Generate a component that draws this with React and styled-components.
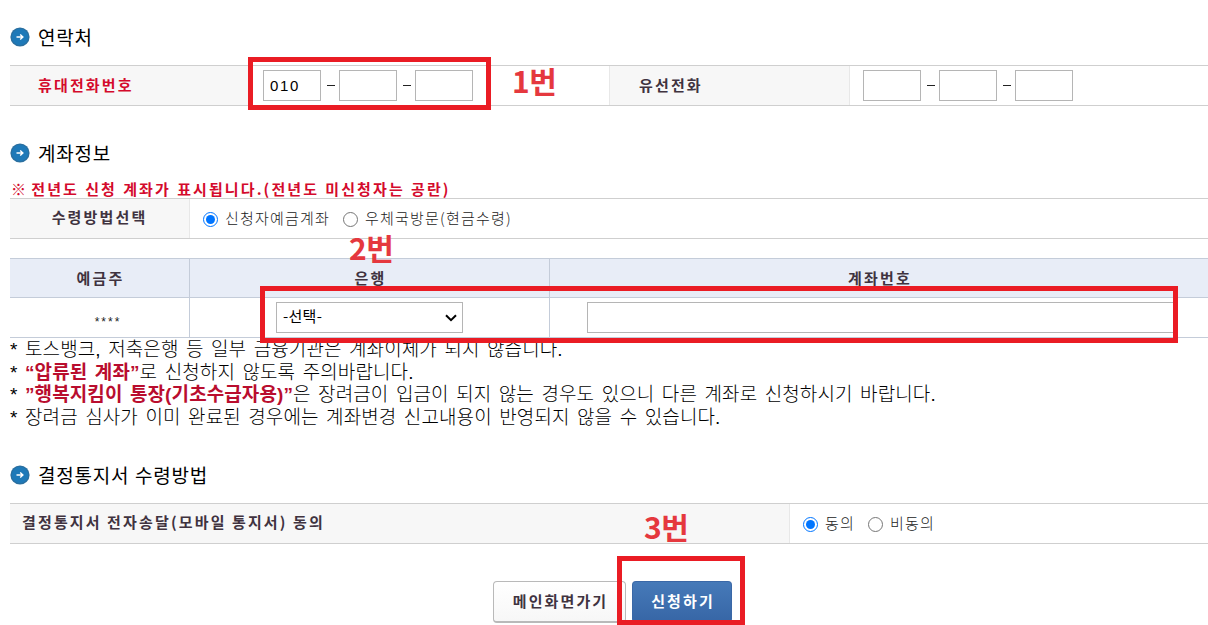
import React, { useState } from 'react'
import styled, { createGlobalStyle } from 'styled-components'

const GlobalStyle = createGlobalStyle`
    * {
        box-sizing: border-box;
    }

    body {
        margin: 0;
        overflow: hidden;
        background-color: #fff;
        color: #222;
        font-family: 'Noto Sans CJK KR', sans-serif;
    }

    input, select, button {
        font-family: inherit;
    }
`

const Page = styled.main`
    position: relative;
    display: flex;
    flex-direction: column;
    width: 1208px;
    height: 625px;
    padding: 25px 0 0 10px;
    overflow: hidden;
`

const Section = styled.section`
    margin-bottom: ${props => props.$gap}px;
`

const Heading = styled.h2`
    display: flex;
    align-items: center;
    gap: 8px;
    height: 24px;
    margin: 0;
    color: #000;
    font-size: 19px;
    font-weight: 400;
    line-height: 24px;
    letter-spacing: 0.8px;
    word-spacing: 0.5px;
    white-space: nowrap;

    svg {
        flex: none;
    }
`

const Row = styled.div`
    display: flex;
    height: 41px;
    margin-top: ${props => props.$top || 0}px;
    border-top: 1px solid #cfcfcf;
    border-bottom: 1px solid #cfcfcf;
`

const Label = styled.div`
    display: flex;
    align-items: center;
    justify-content: ${props => (props.$center ? 'center' : 'flex-start')};
    flex: none;
    width: ${props => props.$width}px;
    padding-left: ${props => props.$pad || 0}px;
    padding-bottom: ${props => props.$lift || 2}px;
    border-right: 1px solid #e8e8e8;
    background-color: #f7f7f7;
    color: ${props => (props.$required ? '#d40a2c' : '#40333f')};
    font-size: 15px;
    font-weight: 700;
    line-height: 20px;
    letter-spacing: 2.15px;
    word-spacing: -0.2px;
    white-space: nowrap;
`

const Value = styled.div`
    display: flex;
    align-items: center;
    flex: none;
    width: ${props => (props.$width ? props.$width + 'px' : 'auto')};
    padding-left: 13px;
    border-right: ${props => (props.$width ? '1px solid #e8e8e8' : 'none')};
`

const PhoneInput = styled.input`
    width: 58px;
    height: 31px;
    padding: 0 6px;
    border: 1px solid #b5b5b5;
    border-radius: 0;
    color: #000;
    font-family: 'Liberation Sans', sans-serif;
    font-size: 15px;
    letter-spacing: 1.6px;
`

const Dash = styled.span`
    width: 8px;
    height: 1px;
    margin: 0 4px 0 6px;
    background-color: #222;
`

const Notice = styled.p`
    height: 19px;
    margin: 14px 0 0 1px;
    color: #d40a2c;
    font-size: 15px;
    font-weight: 700;
    line-height: 20px;
    letter-spacing: 2.1px;
    word-spacing: 0.7px;
    white-space: nowrap;
`

const Mark = styled.span`
    margin-right: -3px;
`

const RadioLabel = styled.label`
    display: flex;
    align-items: center;
    margin-right: 13px;
    font-size: 15px;
    font-weight: 300;
    line-height: 20px;
    letter-spacing: 1.2px;
    white-space: nowrap;

    input {
        width: 15px;
        height: 15px;
        margin: 1px 7px 0 0;
        accent-color: #0075ff;
    }

    span {
        margin-top: -2px;
    }
`

const AccountTable = styled.div`
    display: grid;
    grid-template-columns: 180px 360px 1fr;
    grid-template-rows: 39px 40px;
    height: 80px;
    margin-top: 19px;
    border-top: 1px solid #c4ccd9;
`

const Cell = styled.div`
    display: flex;
    align-items: center;
    padding-left: ${props => props.$pad || 0}px;
    justify-content: ${props => (props.$pad ? 'flex-start' : 'center')};
    border-right: 1px solid #c4ccd9;
    border-bottom: 1px solid #c4ccd9;

    &:nth-child(3n) {
        border-right: none;
    }
`

const HeadCell = styled(Cell)`
    padding-bottom: 2px;
    padding-left: 2px;
    background-color: #e8edf7;
    color: #40333f;
    font-size: 15px;
    font-weight: 700;
    letter-spacing: 2.15px;
    justify-content: center;
`

const Owner = styled.span`
    padding: 8px 0 0 17px;
    font-family: 'Liberation Sans', sans-serif;
    font-size: 12px;
    letter-spacing: 2px;
`

const BankSelect = styled.div`
    display: flex;
    align-items: center;
    justify-content: space-between;
    width: 187px;
    height: 31px;
    padding: 0 5px 0 6px;
    border: 1px solid #b5b5b5;
    color: #000;
    font-size: 15px;
    line-height: 20px;
    letter-spacing: 0.3px;

    span {
        margin-top: -3px;
    }
`

const AccountInput = styled.input`
    width: 587px;
    height: 31px;
    border: 1px solid #b5b5b5;
`

const Notes = styled.ul`
    height: 92px;
    margin: 0;
    padding: 1px 0 0;
    list-style: none;
    color: #000;
    font-family: 'Liberation Sans', 'Noto Sans CJK KR', sans-serif;
    font-size: 19px;
    font-weight: 300;
    line-height: 22.7px;
    letter-spacing: 0.1px;
    word-spacing: 2.1px;
    white-space: nowrap;

    strong {
        color: #b90d2e;
        font-weight: 700;
    }
`

const Actions = styled.div`
    display: flex;
    gap: 6px;
    margin-left: 483px;
`

const Button = styled.button`
    width: ${props => (props.$primary ? 100 : 133)}px;
    height: 42px;
    padding: 0 0 3px 2px;
    border: ${props => (props.$primary ? '1px solid #3a68a7' : '1px solid #b9b9b9')};
    border-bottom-width: 2px;
    border-radius: 4px;
    background: ${props => (props.$primary
        ? 'linear-gradient(#467ab9, #3766a6)'
        : 'linear-gradient(#fff, #f7f7f7)')};
    color: ${props => (props.$primary ? '#fff' : '#40333f')};
    font-size: 15px;
    font-weight: 700;
    letter-spacing: 2.1px;
    white-space: nowrap;
`

// red guide frames and step numbers float over the form
const Frame = styled.div`
    position: absolute;
    left: ${props => props.$x}px;
    top: ${props => props.$y}px;
    width: ${props => props.$w}px;
    height: ${props => props.$h}px;
    border: 5px solid #ea1c24;
    pointer-events: none;
`

const Step = styled.span`
    position: absolute;
    left: ${props => props.$x}px;
    top: ${props => props.$y}px;
    color: #e5383e;
    font-size: 30px;
    font-weight: 700;
    line-height: 40px;
    letter-spacing: -0.5px;
    pointer-events: none;
`

function Title({ children }) {
    return (
        <Heading>
            <svg width='20' height='20' viewBox='0 0 20 20'>
                <circle cx='10' cy='10' r='9.6' fill='#2b6f9f' />
                <circle cx='10' cy='10' r='8.3' fill='#1e79b8' />
                <path d='M6.5 10h6M10.2 7.4l2.7 2.6-2.7 2.6' fill='none' stroke='#fff' strokeWidth='1.4' />
            </svg>
            {children}
        </Heading>
    )
}

function Phone({ first }) {
    return (
        <>
            <PhoneInput defaultValue={first} />
            <Dash />
            <PhoneInput />
            <Dash />
            <PhoneInput />
        </>
    )
}

function Radio({ name, value, current, onChange, children }) {
    return (
        <RadioLabel>
            <input
                type='radio'
                name={name}
                checked={current === value}
                onChange={() => onChange(value)}
            />
            <span>{children}</span>
        </RadioLabel>
    )
}

export default function App() {
    const [method, setMethod] = useState('account')
    const [agree, setAgree] = useState('yes')

    return (
        <>
            <GlobalStyle />
            <Page>
                <Section $gap={35}>
                    <Title>연락처</Title>
                    <Row $top={16}>
                        <Label $width={240} $pad={28} $required>휴대전화번호</Label>
                        <Value $width={360}><Phone first='010' /></Value>
                        <Label $width={240} $pad={29}>유선전화</Label>
                        <Value><Phone /></Value>
                    </Row>
                </Section>

                <Section $gap={33}>
                    <Title>계좌정보</Title>
                    <Notice><Mark>※</Mark> 전년도 신청 계좌가 표시됩니다.(전년도 미신청자는 공란)</Notice>
                    <Row>
                        <Label $width={180} $lift={4} $center>수령방법선택</Label>
                        <Value>
                            <Radio name='method' value='account' current={method} onChange={setMethod}>신청자예금계좌</Radio>
                            <Radio name='method' value='post' current={method} onChange={setMethod}>우체국방문(현금수령)</Radio>
                        </Value>
                    </Row>

                    <AccountTable>
                        <HeadCell>예금주</HeadCell>
                        <HeadCell>은행</HeadCell>
                        <HeadCell>계좌번호</HeadCell>
                        <Cell><Owner>****</Owner></Cell>
                        <Cell $pad={86}>
                            <BankSelect>
                                <span>-선택-</span>
                                <svg width='12' height='8' viewBox='0 0 12 8'>
                                    <path d='M1 1.2l5 5 5-5' fill='none' stroke='#000' strokeWidth='2' />
                                </svg>
                            </BankSelect>
                        </Cell>
                        <Cell $pad={37}><AccountInput /></Cell>
                    </AccountTable>
                    <Notes>
                        <li>* 토스뱅크, 저축은행 등 일부 금융기관은 계좌이체가 되지 않습니다.</li>
                        <li>* <strong>“압류된 계좌”</strong>로 신청하지 않도록 주의바랍니다.</li>
                        <li>* <strong>”행복지킴이 통장(기초수급자용)”</strong>은 장려금이 입금이 되지 않는 경우도 있으니 다른 계좌로 신청하시기 바랍니다.</li>
                        <li>* 장려금 심사가 이미 완료된 경우에는 계좌변경 신고내용이 반영되지 않을 수 있습니다.</li>
                    </Notes>
                </Section>

                <Section $gap={37}>
                    <Title>결정통지서 수령방법</Title>
                    <Row $top={16}>
                        <Label $width={780} $pad={12} $lift={4}>결정통지서 전자송달(모바일 통지서) 동의</Label>
                        <Value>
                            <Radio name='agree' value='yes' current={agree} onChange={setAgree}>동의</Radio>
                            <Radio name='agree' value='no' current={agree} onChange={setAgree}>비동의</Radio>
                        </Value>
                    </Row>
                </Section>

                <Actions>
                    <Button>메인화면가기</Button>
                    <Button $primary>신청하기</Button>
                </Actions>

                <Frame $x={248} $y={57} $w={243} $h={53} />
                <Frame $x={260} $y={286} $w={918} $h={57} />
                <Frame $x={617} $y={556} $w={128} $h={69} />
                <Step $x={512} $y={60}>1번</Step>
                <Step $x={349} $y={227}>2번</Step>
                <Step $x={644} $y={506}>3번</Step>
            </Page>
        </>
    )
}
